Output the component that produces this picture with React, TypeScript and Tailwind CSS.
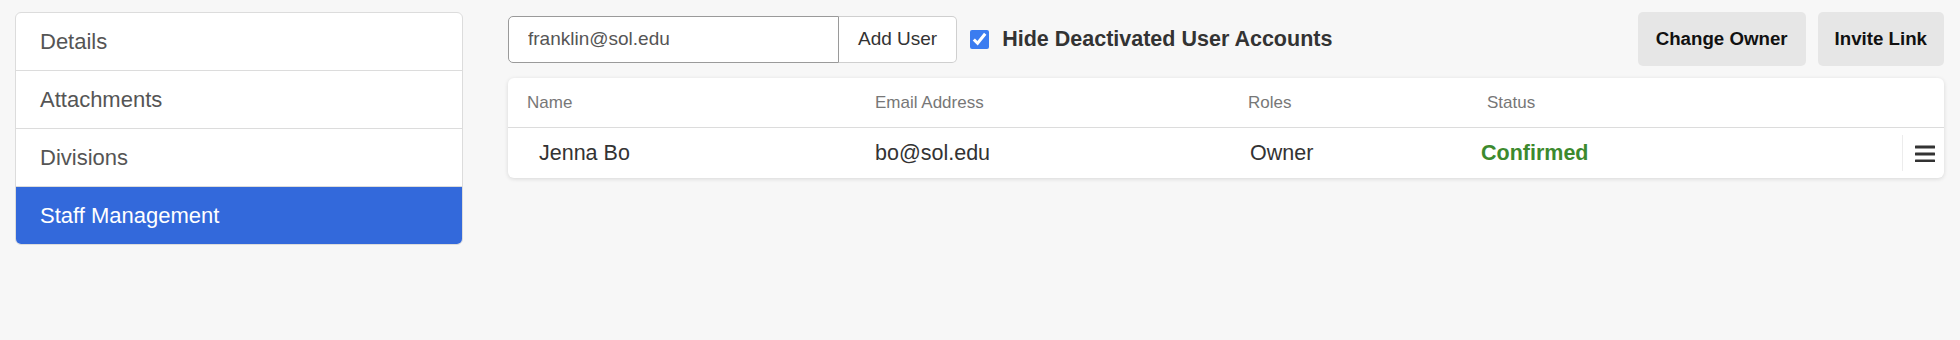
import { useState } from 'react';

const NAV_ITEMS = ['Details', 'Attachments', 'Divisions', 'Staff Management'];

const STAFF = [{ name: 'Jenna Bo', email: 'bo@sol.edu', role: 'Owner', status: 'Confirmed' }];

const MenuIcon = () => (
  <svg width="20" height="18" viewBox="0 0 20 18" fill="#333">
    <rect x="0" y="1.5" width="20" height="3" rx="0.5" />
    <rect x="0" y="8.5" width="20" height="3" rx="0.5" />
    <rect x="0" y="15.5" width="20" height="3" rx="0.5" />
  </svg>
);

export default function App() {
  const [active, setActive] = useState('Staff Management');
  const [email, setEmail] = useState('franklin@sol.edu');
  const [hideDeactivated, setHideDeactivated] = useState(true);

  return (
    <div className="min-h-[340px] w-full bg-[#f7f7f7] font-['Liberation_Sans',Arial,sans-serif] flex items-start pl-[15px] pr-[16px] pt-[12px]">
      {/* Side navigation */}
      <nav className="w-[448px] shrink-0 bg-white border border-[#dcdcdc] rounded-[6px] overflow-hidden">
        {NAV_ITEMS.map((item, i) => (
          <button
            key={item}
            type="button"
            onClick={() => setActive(item)}
            className={`w-full flex items-center pl-[24px] text-[22px] text-left ${
              i > 0 ? 'h-[58px] border-t border-[#dcdcdc]' : 'h-[57px]'
            } ${active === item ? 'bg-[#3369db] text-white border-[#3369db]' : 'text-[#555]'}`}
          >
            {item}
          </button>
        ))}
      </nav>

      <div className="flex-1 ml-[45px] flex flex-col">
        {/* Toolbar */}
        <div className="flex items-center h-[54px]">
          <div className="flex h-[47px]">
            <input
              type="text"
              value={email}
              onChange={(e) => setEmail(e.target.value)}
              className="w-[331px] h-full pl-[19px] text-[19px] text-[#555] bg-white border border-[#9a9a9a] rounded-l-[5px] focus:outline-none"
            />
            <button
              type="button"
              className="h-full px-[19px] text-[19px] text-[#333] bg-white border border-l-0 border-[#cfcfcf] rounded-r-[5px]"
            >
              Add User
            </button>
          </div>
          <label className="flex items-center ml-[13px] gap-[13px] cursor-pointer">
            <input
              type="checkbox"
              checked={hideDeactivated}
              onChange={(e) => setHideDeactivated(e.target.checked)}
              className="w-[19px] h-[19px] accent-[#3b7cf0]"
            />
            <span className="text-[21.5px] font-bold text-[#333]">Hide Deactivated User Accounts</span>
          </label>
          <div className="ml-auto flex gap-[12px]">
            <button type="button" className="h-[54px] px-[18px] bg-[#e6e6e6] rounded-[5px] text-[18.7px] font-bold text-[#111]">
              Change Owner
            </button>
            <button type="button" className="h-[54px] px-[17px] bg-[#e6e6e6] rounded-[5px] text-[18.7px] font-bold text-[#111]">
              Invite Link
            </button>
          </div>
        </div>

        {/* Staff table */}
        <div className="mt-[12px] bg-white rounded-[6px] shadow-[0_1px_4px_rgba(0,0,0,0.13)]">
          <div className="grid grid-cols-[348px_373px_239px_1fr_42px] h-[50px] items-center border-b border-[#dcdcdc] text-[17px] text-[#777]">
            <div className="pl-[19px]">Name</div>
            <div className="pl-[19px]">Email Address</div>
            <div className="pl-[19px]">Roles</div>
            <div className="pl-[19px]">Status</div>
            <div />
          </div>
          {STAFF.map((s) => (
            <div key={s.email} className="grid grid-cols-[348px_373px_239px_1fr_42px] h-[50px] items-center text-[21.5px] text-[#333]">
              <div className="pl-[31px]">{s.name}</div>
              <div className="pl-[19px]">{s.email}</div>
              <div className="pl-[21px]">{s.role}</div>
              <div className="pl-[13px] font-bold text-[#3c8a2e]">{s.status}</div>
              <div className="h-[36px] border-l border-[#ececec] flex items-center justify-center pl-[3px]">
                <MenuIcon />
              </div>
            </div>
          ))}
        </div>
      </div>
    </div>
  );
}
